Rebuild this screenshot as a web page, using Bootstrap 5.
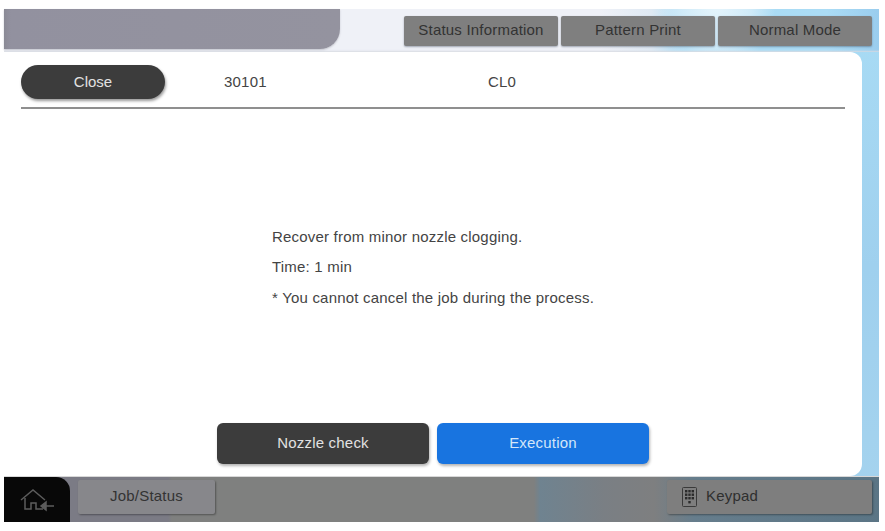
<!DOCTYPE html>
<html lang="en">
<head>
<meta charset="utf-8">
<title>Cleaning</title>
<link href="https://cdn.jsdelivr.net/npm/bootstrap@5.3.0/dist/css/bootstrap.min.css" rel="stylesheet">
<style>
html,body{height:100%;background:#fff;overflow:hidden}
body{font-family:"Liberation Sans",Arial,sans-serif;font-size:15px;color:#444;padding:9px 6px 9px 4px}
.scr{height:513px;background:linear-gradient(180deg,#a9dcf5 0,#9fd0ee 50%,#a5d3ee 100%)}
.topstrip{height:43px;flex:none;background:
 radial-gradient(ellipse 60px 70px at 712px -6px,#e6f5fc 0,#cfeaf8 60%,transparent 100%),
 linear-gradient(90deg,#eff1f7 0,#eff1f7 68%,#dfe9f3 74%,#a9dcf5 78%,#abdcf5 94%,#9acdee 100%);
 box-shadow:inset 0 -3px 2px -2px #d8dbe2}
.tabshape{width:336px;height:40px;flex:none;background:linear-gradient(90deg,#8a8a95 0,#92919f 2%,#94939f 100%);border-bottom-right-radius:20px;box-shadow:0 1px 2px #c3c4cc}
.topbtn{width:154px;height:30px;padding-bottom:2px;background:#7f7f7f;color:#333;border-radius:2px;box-shadow:0 1px 2px rgba(60,70,90,.45);letter-spacing:.2px}
.topset{gap:3px;padding:7px 7px 0 0;align-items:flex-start}
.midrow{height:424px;flex:none}
.panel{width:858px;flex:none;background:#fff;border-radius:0 12px 12px 0;padding:14px 17px 12px}
.headrow{height:43px;border-bottom:2px solid #8f8f8f;flex:none}
.closebtn{width:144px;height:34px;background:#3c3c3c;color:#e2e2e2;border-radius:17px;box-shadow:1px 2px 3px rgba(0,0,0,.4);margin-top:-1px}
.code1{margin-left:59px;width:264px;letter-spacing:.2px}
.code2{letter-spacing:.2px}
.hdtext{height:32px;line-height:32px}
.msg{padding:119px 0 0 251px;flex:1;letter-spacing:.2px}
.msg p{margin:0 0 12.4px;line-height:18px}
.actbtn{width:212px;height:41px;border-radius:6px;box-shadow:1px 2px 3px rgba(0,0,0,.3);color:#e2e2e2;letter-spacing:.2px}
.darkb{background:#3c3c3c}
.blueb{background:#1874e0;color:#d3e6f9}
.bottomset{gap:8px;padding-left:196px}
.botbar{height:46px;flex:none;border-top:1px solid #d8d8d8;background:linear-gradient(90deg,#7b7b85 0,#7b7b85 164px,#7f807f 168px,#7f807f 530px,#6f8390 536px,#7a7f84 600px,#7e7f80 650px,#667d8c 690px,#5b7585 100%)}
.homebox{width:66px;height:45px;background:#080808;border-top-right-radius:14px;flex:none}
.jobbtn{width:137px;height:34px;padding-bottom:2px;margin:3px 0 0 8px;background:#87878b;color:#333;border-radius:2px;box-shadow:1px 1px 2px rgba(0,0,0,.35);letter-spacing:.2px}
.keybtn{width:205px;height:34px;margin:3px 7px 0 0;background:#7e7e7e;color:#2f2f2f;border-radius:2px;box-shadow:1px 1px 2px rgba(0,0,0,.35);letter-spacing:.2px;padding-left:15px;gap:9px}
.keylabel{margin-top:-2px}
</style>
</head>
<body>
<div class="scr d-flex flex-column">
  <div class="topstrip d-flex justify-content-between">
    <div class="tabshape"></div>
    <div class="topset d-flex">
      <div class="topbtn d-flex align-items-center justify-content-center">Status Information</div>
      <div class="topbtn d-flex align-items-center justify-content-center">Pattern Print</div>
      <div class="topbtn d-flex align-items-center justify-content-center">Normal Mode</div>
    </div>
  </div>
  <div class="midrow d-flex">
    <div class="panel d-flex flex-column">
      <div class="headrow d-flex align-items-start">
        <div class="closebtn d-flex align-items-center justify-content-center">Close</div>
        <div class="code1 hdtext">30101</div>
        <div class="code2 hdtext">CL0</div>
      </div>
      <div class="msg">
        <p>Recover from minor nozzle clogging.</p>
        <p>Time: 1 min</p>
        <p>* You cannot cancel the job during the process.</p>
      </div>
      <div class="bottomset d-flex">
        <div class="actbtn darkb d-flex align-items-center justify-content-center">Nozzle check</div>
        <div class="actbtn blueb d-flex align-items-center justify-content-center">Execution</div>
      </div>
    </div>
  </div>
  <div class="botbar d-flex">
    <div class="homebox d-flex align-items-center justify-content-center">
      <svg width="36" height="26" viewBox="0 0 36 26" fill="none" stroke="#5c5c5c" stroke-width="1.5">
        <path d="M2 13 L14 3 L26 13"/>
        <path d="M6 11 V22 H12 V16 H17 V22 H24"/>
        <path d="M22 19 H35"/>
        <path d="M27 15 L22 19 L27 23 Z" fill="#5c5c5c"/>
      </svg>
    </div>
    <div class="jobbtn d-flex align-items-center justify-content-center">Job/Status</div>
    <div class="flex-grow-1"></div>
    <div class="keybtn d-flex align-items-center">
      <svg width="15" height="20" viewBox="0 0 15 20" fill="#2b2b2b">
        <rect x=".5" y=".5" width="14" height="19" rx="1" fill="none" stroke="#3a3a3a"/>
        <rect x="3" y="3" width="2.4" height="2.4"/><rect x="6.3" y="3" width="2.4" height="2.4"/><rect x="9.6" y="3" width="2.4" height="2.4"/>
        <rect x="3" y="6.5" width="2.4" height="2.4"/><rect x="6.3" y="6.5" width="2.4" height="2.4"/><rect x="9.6" y="6.5" width="2.4" height="2.4"/>
        <rect x="3" y="10" width="2.4" height="2.4"/><rect x="6.3" y="10" width="2.4" height="2.4"/><rect x="9.6" y="10" width="2.4" height="2.4"/>
        <rect x="6.3" y="14" width="2.4" height="2.4"/>
      </svg>
      <span class="keylabel">Keypad</span>
    </div>
  </div>
</div>
<script src="https://cdn.jsdelivr.net/npm/bootstrap@5.3.0/dist/js/bootstrap.bundle.min.js"></script>
</body>
</html>
